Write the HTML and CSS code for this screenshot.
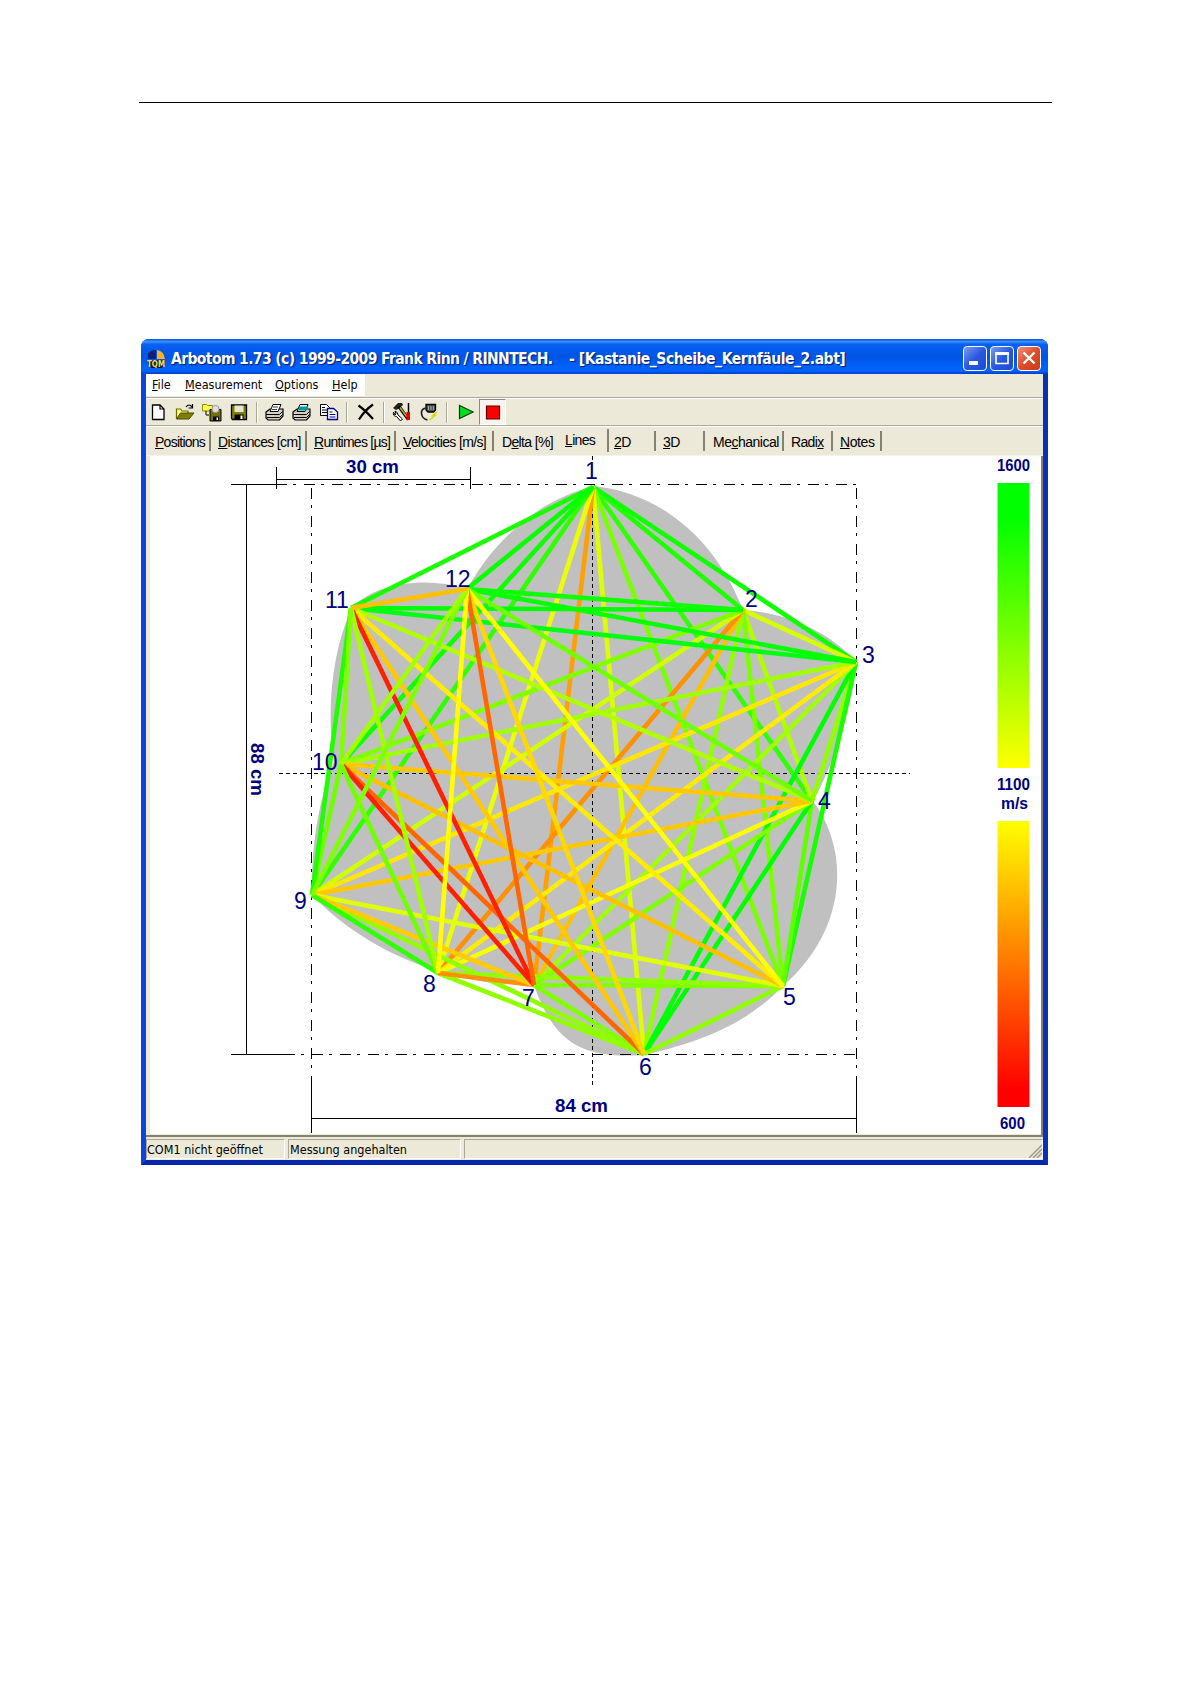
FILE: index.html
```
<!DOCTYPE html>
<html lang="en">
<head>
  <meta charset="UTF-8">
  <meta name="viewport" content="width=device-width, initial-scale=1.0">
  <title>Arbotom 1.73</title>
  <link rel="stylesheet" href="styles.css">
</head>
<body>
  <hr class="page-rule">

  <div class="window">
    <div class="titlebar">
      <svg class="app-icon" width="18" height="18" viewBox="0 0 18 18">
        <path d="M1 9V3Q4 0 9 0v9z" fill="#10207c"/>
        <path d="M10 0q7 1 8 9h-8z" fill="#ffb020"/>
        <path d="M1 10h17v4l-3 4H4l-3-4z" fill="#151a30"/>
        <text x="0" y="17" font-size="8" font-weight="bold" fill="#e8e070" textLength="18" lengthAdjust="spacingAndGlyphs">TQM</text>
      </svg>
      <span class="title-app">Arbotom 1.73 (c) 1999-2009 Frank Rinn / RINNTECH.</span>
      <span class="title-file">- [Kastanie_Scheibe_Kernfäule_2.abt]</span>
      <div class="caption-buttons">
        <div class="cap"><svg width="22" height="22"><path d="M5 16h9" stroke="#fff" stroke-width="4"/></svg></div>
        <div class="cap"><svg width="22" height="22"><path d="M5 6.5h12v10H5z" fill="none" stroke="#fff" stroke-width="1.6"/><path d="M4.2 6.5h13.6" stroke="#fff" stroke-width="3"/></svg></div>
        <div class="cap close"><svg width="22" height="22"><path d="M5.5 5.5l11 11M16.500 5.500l-11 11" stroke="#fff" stroke-width="2.4"/></svg></div>
      </div>
    </div>

    <div class="menubar">
      <div class="menus">
        <span class="m-file"><u>F</u>ile</span>
        <span class="m-meas"><u>M</u>easurement</span>
        <span class="m-opt"><u>O</u>ptions</span>
        <span class="m-help"><u>H</u>elp</span>
      </div>
    </div>

    <div class="toolbar">
      <span class="tool first"><svg width="20" height="20" viewBox="0 0 20 20"><path d="M4.500 3h7.500l4 4v10.500H4.500z" fill="#fff" stroke="#000" stroke-width="1.300"/><path d="M12 3v4h4" fill="none" stroke="#000" stroke-width="1.200"/></svg></span>
      <span class="tool"><svg width="20" height="20" viewBox="0 0 20 20"><path d="M1.500 17V7h4l1.500 2h6v2" fill="#ffff70" stroke="#6b6b00" stroke-width="1.200"/><path d="M1.500 17l4-6H19l-5 6z" fill="#808000" stroke="#4a4a00"/><path d="M11 5q3-4 6 0M17.500 2v4h-4" fill="none" stroke="#000" stroke-width="1.200"/></svg></span>
      <span class="tool"><svg width="20" height="20" viewBox="0 0 20 20"><path d="M.5 9V2.500h4l1 1h5V9z" fill="#ffff50" stroke="#8a8a00"/><path d="M4 9v4h3" fill="none" stroke="#000"/><path d="M8 7.500h11V19H8z" fill="#707000" stroke="#000"/><circle cx="13.500" cy="7" r="3.600" fill="#ddd" stroke="#999"/><path d="M11 14.500h6V19h-6z" fill="#000"/><path d="M14.500 15.500h1.500V18h-1.500z" fill="#fff"/></svg></span>
      <span class="tool"><svg width="20" height="20" viewBox="0 0 20 20"><path d="M2.500 3h15v14.500h-14l-1-1z" fill="#808000" stroke="#000" stroke-width="1.300"/><path d="M5.500 3.500h9V10h-9z" fill="#e4e4d8"/><path d="M5.500 12.500h9v5h-9z" fill="#000"/><path d="M11.500 13.500h2v3.500h-2z" fill="#fff"/></svg></span>
      <i class="sep"></i>
      <span class="tool"><svg width="20" height="20" viewBox="0 0 20 20"><path d="M1 10l4-3h13v7l-3.500 4H3l-2-2z" fill="#d4d0c8" stroke="#000" stroke-width="1.200"/><path d="M5 9.500l3-7h8l-3 7z" fill="#fff" stroke="#000"/><path d="M8 5h5M7 7.500h5" stroke="#000" stroke-width=".8"/><path d="M1 12.500h13.500l3-3M2 15.500h12.500l3-3" fill="none" stroke="#000"/><path d="M9 14h4" stroke="#d8d000" stroke-width="1.400"/></svg></span>
      <span class="tool"><svg width="20" height="20" viewBox="0 0 20 20"><path d="M1 10l4-3h13v7l-3.500 4H3l-2-2z" fill="#d4d0c8" stroke="#000" stroke-width="1.200"/><path d="M5 9.500l3-7h8l-3 7z" fill="#fff" stroke="#000"/><path d="M6 8.500l1.500-4h9l-2 4z" fill="#009c9c"/><path d="M1 12.500h13.500l3-3M2 15.500h12.500l3-3" fill="none" stroke="#000"/><path d="M9 14h4" stroke="#d8d000" stroke-width="1.400"/></svg></span>
      <span class="tool"><svg width="20" height="20" viewBox="0 0 20 20"><path d="M1.500 2.500h6l3 3v8h-9z" fill="#fff" stroke="#000"/><path d="M3 5.500h3M3 8h5M3 10.500h5" stroke="#000"/><path d="M8.500 6.500h6l4 3.500v7.500h-10z" fill="#fff" stroke="#00008c" stroke-width="1.300"/><path d="M10.500 10h3M10.500 12.500h6M10.500 15h6" stroke="#00008c"/></svg></span>
      <i class="sep"></i>
      <span class="tool"><svg width="20" height="20" viewBox="0 0 20 20"><path d="M2.500 3.500Q9 8 17 17M17 2.500Q9 8 3 17.500" fill="none" stroke="#000" stroke-width="2.200"/></svg></span>
      <i class="sep"></i>
      <span class="tool"><svg width="20" height="20" viewBox="0 0 20 20"><path d="M1 6l5-5h4l1 2-5 4-2 1z" fill="#222"/><path d="M7 4.500l9.500 13" stroke="#000" stroke-width="3.400"/><path d="M8 5.500l7 9.500" stroke="#b0b020" stroke-width="1.600"/><path d="M16.500 1v9" stroke="#000" stroke-width="1.500"/><path d="M14.500 10H18v8h-3.500z" fill="#e80000"/><path d="M1.500 10q-1 4 3 4.500l4 4.500 2-2-4.500-4q0-3-3-4l1 3-1 1z" fill="#fff" stroke="#000"/></svg></span>
      <span class="tool"><svg width="20" height="20" viewBox="0 0 20 20"><path d="M7 2.500h9.500V8l-2 2H9L7 8z" fill="#555" stroke="#000" stroke-width="1.300"/><path d="M9.500 4v4M12 4v4M14.400 4v4" stroke="#bbb" stroke-width=".8"/><path d="M7.500 6Q2 6.500 2.500 11.500T8.500 18" fill="none" stroke="#222" stroke-width="1.700"/><path d="M18 10l-4 3.500h2L10.500 18" fill="none" stroke="#d8d800" stroke-width="1.500"/></svg></span>
      <i class="sep"></i>
      <span class="tool"><svg width="20" height="20" viewBox="0 0 20 20"><path d="M3.500 3.500v13L17 10z" fill="#00e020" stroke="#003c00" stroke-width="1.200"/></svg></span>
      <span class="tool pressed"><svg width="20" height="20" viewBox="0 0 20 20"><path d="M3.500 4h13v13h-13z" fill="#f00" stroke="#600000" stroke-width="1.200"/></svg></span>
    </div>

    <div class="tabs">
      <span class="tab t-pos"><u>P</u>ositions</span>
      <span class="tab t-dist"><u>D</u>istances [cm]</span>
      <span class="tab t-run"><u>R</u>untimes [µs]</span>
      <span class="tab t-vel"><u>V</u>elocities [m/s]</span>
      <span class="tab t-delta">D<u>e</u>lta [%]</span>
      <span class="tab t-lines active"><u>L</u>ines</span>
      <span class="tab t-2d"><u>2</u>D</span>
      <span class="tab t-3d"><u>3</u>D</span>
      <span class="tab t-mech">Me<u>c</u>hanical</span>
      <span class="tab t-radix">Radi<u>x</u></span>
      <span class="tab t-notes"><u>N</u>otes</span>
    </div>

    <div class="view">
      <!-- viewBox starts at the top left of the drawing area -->
      <svg class="plot" width="891" height="678" viewBox="150 456 891 678">
        <defs>
          <linearGradient id="fast" x1="0" y1="0" x2="0" y2="1"><stop offset="0" stop-color="#0f0"/><stop offset=".12" stop-color="#0f0"/><stop offset="1" stop-color="#ff0"/></linearGradient>
          <linearGradient id="slow" x1="0" y1="0" x2="0" y2="1"><stop offset="0" stop-color="#ff0"/><stop offset=".94" stop-color="#f00"/></linearGradient>
        </defs>

        <path class="trunk" d="M594 486C650 492 711 528 743 610C788 613 826 630 857 662C851 710 836 760 813 801C850 850 848 930 783 986C750 1020 710 1040 644 1055C590 1058 556 1050 534 985L500 984C420 975 355 940 312 895C311 850 318 800 334 762C326 710 332 650 352 608C375 583 425 576 467 589C498 535 540 500 594 486Z"/>

        <g class="axis">
          <path class="dashdot" d="M276 484.500H857M284 1054.500H857M311.500 488V1085M856.500 488V1085"/>
          <path class="dot" d="M592.500 456v4M592.500 486V1087M279 773.500H910"/>
          <path d="M231 484.500H278M231 1054.500H284M246.500 485V1055"/>
          <path d="M276.500 467V489M470.500 467V489M276 479.500H471"/>
          <path d="M311.500 1080V1133M856.500 1080V1133M311 1118.500H857"/>
        </g>

        <g id="rays" class="rays"></g>

        <g class="sensor">
          <text x="585" y="479">1</text>
          <text x="745" y="607">2</text>
          <text x="862" y="663">3</text>
          <text x="818" y="809">4</text>
          <text x="783" y="1005">5</text>
          <text x="639" y="1075">6</text>
          <text x="522" y="1006">7</text>
          <text x="423" y="992">8</text>
          <text x="294" y="909">9</text>
          <text x="312" y="770">10</text>
          <text x="325" y="608">11</text>
          <text x="445" y="587">12</text>
        </g>

        <g class="measure">
          <text x="346" y="473" textLength="53" lengthAdjust="spacingAndGlyphs">30 cm</text>
          <text x="555" y="1112" textLength="53" lengthAdjust="spacingAndGlyphs">84 cm</text>
          <text transform="translate(251 743) rotate(90)" textLength="53" lengthAdjust="spacingAndGlyphs">88 cm</text>
        </g>

        <rect x="997.500" y="483" width="32" height="285" fill="url(#fast)"/>
        <rect x="997.500" y="821" width="32" height="286" fill="url(#slow)"/>
        <g class="legend">
          <text x="997" y="471" textLength="33" lengthAdjust="spacingAndGlyphs">1600</text>
          <text x="997" y="790" textLength="33" lengthAdjust="spacingAndGlyphs">1100</text>
          <text x="1001" y="809" textLength="27" lengthAdjust="spacingAndGlyphs">m/s</text>
          <text x="1000" y="1129" textLength="25" lengthAdjust="spacingAndGlyphs">600</text>
        </g>
      </svg>
    </div>

    <div class="statusbar">
      <span class="s-port">COM1 nicht geöffnet</span>
      <span class="s-state">Messung angehalten</span>
      <span class="s-rest"><svg width="14" height="14" viewBox="0 0 14 14"><path d="M1 14L14 1M5 14l9-9M9 14l5-5" stroke="#9c9a8a" stroke-width="1.500"/></svg></span>
    </div>
  </div>

  <script src="rays.js"></script>
</body>
</html>
```
FILE: styles.css
```
* {
  box-sizing: border-box;
}
body {
  margin: 0;
  padding: 102px 139px 0;
  background-color: #fff;
  color: #000;
  font-family: "Liberation Sans", Arial, sans-serif;
}
.page-rule {
  margin: 0 0 236px;
  width: 913px;
  border: 0;
  border-top: 1px solid #000;
}
.window {
  margin-left: 2px;
  width: 907px;
  height: 826px;
  display: flex;
  flex-direction: column;
  background-color: #ece9d8;
  border: 5px solid #0a46dc;
  border-color: #0a46dc #0831b8 #0726a8 #0a46dc;
  border-top: 0;
  border-radius: 8px 8px 0 0;
}

/* title bar */
.titlebar {
  height: 35px;
  margin: 0 -5px;
  padding: 4px 7px 0 6px;
  display: flex;
  align-items: center;
  border-radius: 8px 8px 0 0;
  background: linear-gradient(#0a50d0 0, #3a90ff 7%, #0660f0 16%, #0054e3 50%, #0062ff 82%, #0060fc 92%, #003cc0 100%);
  color: #fff;
  font: bold 15.500px "DejaVu Sans Condensed", "DejaVu Sans", sans-serif;
  white-space: pre;
  text-shadow: 1px 1px 1px #0a1c70;
}
.app-icon {
  margin-right: 6px;
  text-shadow: none;
}
.title-app {
  width: 398px;
  letter-spacing: -0.6px;
}
.title-file {
  letter-spacing: -0.45px;
}
.caption-buttons {
  margin-left: auto;
  display: flex;
  gap: 3px;
}
.cap {
  width: 24px;
  height: 25px;
  border: 1px solid #fff;
  border-radius: 4px;
  background: linear-gradient(135deg, #7c9cf0, #2858e0 50%, #1c4cd0);
}
.cap.close {
  background: linear-gradient(135deg, #f09078, #e04c28 50%, #c83c18);
}

/* menu */
.menubar {
  height: 24px;
  border-bottom: 1px solid #aca899;
  font: 12.500px "DejaVu Sans Condensed", "DejaVu Sans", sans-serif;
}
.menus {
  width: 219px;
  height: 22px;
  padding: 0 0 2px 6px;
  display: flex;
  align-items: center;
  background-color: #fff;
  white-space: nowrap;
}
.m-file {
  width: 33px;
}
.m-meas {
  width: 90px;
}
.m-opt {
  width: 57px;
}

/* toolbar */
.toolbar {
  height: 28px;
  display: flex;
  align-items: center;
  border-top: 1px solid #fff;
  border-bottom: 1px solid #aca899;
}
.tool {
  width: 27px;
  height: 26px;
  display: flex;
  align-items: center;
  justify-content: center;
}
.tool.first {
  width: 25px;
  padding-right: 2px;
}
.tool.pressed {
  background-color: #f6f4ec;
  border: 1px solid #fff;
  border-top-color: #8c8a7c;
  border-left-color: #8c8a7c;
}
.sep {
  width: 2px;
  height: 21px;
  margin: 0 4px 0 3.5px;
  border-left: 1px solid #aca899;
  border-right: 1px solid #fff;
}

/* tabs */
.tabs {
  height: 30px;
  padding: 4px 0 3px 4px;
  display: flex;
  border-top: 1px solid #fff;
  border-bottom: 1px solid #f6f4ea;
  font-size: 14px;
  line-height: 22px;
  white-space: nowrap;
}
.tab {
  height: 20px;
  border-right: 2px solid #85836f;
  padding-left: 7px;
  letter-spacing: -0.65px;
}
.t-pos {
  width: 61px;
  padding-left: 5px;
  letter-spacing: -0.75px;
}
.t-dist {
  width: 96px;
}
.t-run {
  width: 89px;
  letter-spacing: -0.75px;
}
.t-vel {
  width: 98px;
  padding-left: 7px;
}
.t-delta {
  width: 64px;
  padding-left: 8px;
  border-right: 0;
}
.t-lines {
  width: 51px;
}
.tab.active {
  height: 23px;
  margin-top: -2px;
}
.t-2d {
  width: 47px;
  padding-left: 5px;
}
.t-3d {
  width: 49px;
}
.t-mech {
  width: 79px;
  padding-left: 8px;
  letter-spacing: -0.5px;
}
.t-radix {
  width: 49px;
}
.t-notes {
  width: 49px;
  letter-spacing: -0.4px;
}

/* drawing */
.view {
  height: 681px;
  padding-left: 4px;
  border-bottom: 2px solid #85836f;
  border-right: 2px solid #85836f;
}
.plot {
  display: block;
  width: 891px;
  height: 678px;
  background-color: #fff;
}
.trunk {
  fill: #c0c0c0;
}
.axis path {
  fill: none;
  stroke: #000;
  stroke-width: 1;
}
.axis .dashdot {
  stroke-dasharray: 11 6 3 8;
}
.axis .dot {
  stroke-dasharray: 4 3;
}
.rays line {
  stroke-width: 4.600px;
}
.sensor text {
  font-size: 23px;
  fill: #000080;
}
.measure text {
  font-size: 18.500px;
  font-weight: bold;
  fill: #000080;
}
.legend text {
  font-size: 16px;
  font-weight: bold;
  fill: #000080;
}

/* status bar */
.statusbar {
  height: 22px;
  padding-top: 2px;
  display: flex;
  gap: 3px;
  font: 12.500px/19px "DejaVu Sans Condensed", "DejaVu Sans", sans-serif;
  white-space: nowrap;
}
.statusbar span {
  height: 20px;
  border: 1px solid #fff;
  border-top-color: #aca899;
  border-left-color: #aca899;
}
.s-port {
  width: 139px;
}
.s-state {
  width: 173px;
  padding-left: 1px;
}
.s-rest {
  flex: 1;
  display: flex;
  justify-content: flex-end;
  align-items: flex-end;
}
```
FILE: rays.js
```
// sensor positions
const sensors = [
  null,
  [593, 487], [743, 610], [856, 662], [812, 801], [783, 986], [644, 1054],
  [534, 985], [438, 973], [312, 895], [341, 764], [351, 608], [467, 589]
];

// colours from sensor i to every following sensor
const rays = {
  1: ['#20ff00', '#10ff00', '#30ff00', '#78ff00', '#dcff00', '#ffa000', '#ecff00', '#30ff00', '#10ff00', '#18ff00', '#08ff00'],
  2: ['#d8ff00', '#b0ff00', '#78ff00', '#90ff00', '#ffc000', '#ff9000', '#d0ff00', '#80ff00', '#00ff00', '#10ff00'],
  3: ['#90ff00', '#18ff00', '#00ff00', '#a0ff00', '#ffec00', '#ffe800', '#a0ff00', '#00ff10', '#08ff00'],
  4: ['#60ff00', '#00ff00', '#80ff00', '#f8ff00', '#ffc800', '#ffc800', '#b0ff00', '#70ff00'],
  5: ['#90ff00', '#80ff00', '#90ff00', '#e0ff00', '#ffc000', '#ffec00', '#ffff00'],
  6: ['#80ff00', '#90ff00', '#90ff00', '#ff6600', '#ffc800', '#ffd800'],
  7: ['#ff9000', '#ffcc00', '#ff2000', '#ff2000', '#ff6600'],
  8: ['#30ff00', '#70ff00', '#a0ff00', '#ffff00'],
  9: ['#70ff00', '#20ff00', '#80ff00'],
  10: ['#80ff00', '#a0ff00'],
  11: ['#ffc000']
};

const group = document.getElementById('rays');

for (const i in rays) {
  rays[i].forEach((color, n) => {
    const from = sensors[i];
    const to = sensors[Number(i) + n + 1];
    const line = document.createElementNS('http://www.w3.org/2000/svg', 'line');
    line.setAttribute('x1', from[0]);
    line.setAttribute('y1', from[1]);
    line.setAttribute('x2', to[0]);
    line.setAttribute('y2', to[1]);
    line.setAttribute('stroke', color);
    group.appendChild(line);
  });
}
```
